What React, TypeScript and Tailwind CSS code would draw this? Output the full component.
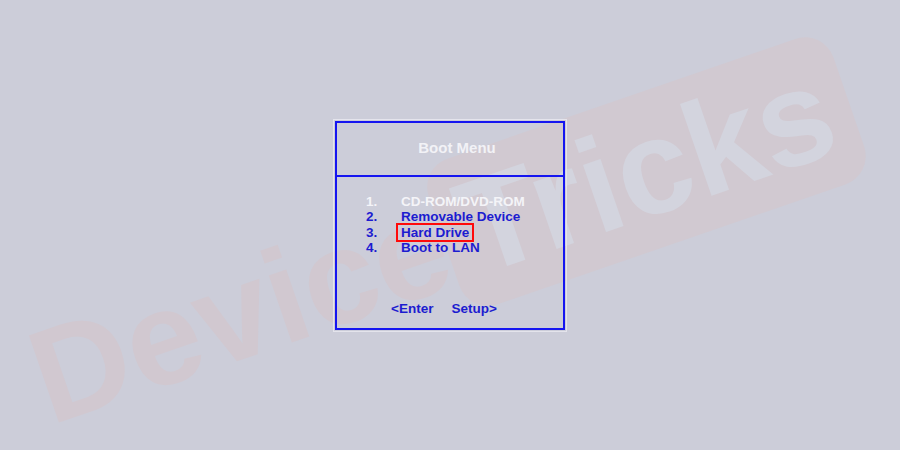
const items = [
  { n: "1.", label: "CD-ROM/DVD-ROM", active: true },
  { n: "2.", label: "Removable Device" },
  { n: "3.", label: "Hard Drive", marked: true },
  { n: "4.", label: "Boot to LAN" },
];

function Watermark() {
  // faint site watermark sitting behind the boot menu
  return (
    <div className="pointer-events-none absolute left-[442px] top-[242px] -translate-x-1/2 -translate-y-1/2 rotate-[-19deg]">
      <div className="flex items-center font-['Liberation_Sans',Arial,sans-serif] text-[134px] font-bold leading-none">
        <span className="text-[#d1c8d0]">Device</span>
        <span className="rounded-[30px] bg-[#d1c9d1] px-5 pb-3 pt-2 text-[#d3d4de]">Tricks</span>
      </div>
    </div>
  );
}

export default function App() {
  return (
    <div className="relative flex h-[450px] w-[900px] items-center justify-center overflow-hidden bg-[#cccdd9] font-['Liberation_Sans',Arial,sans-serif]">
      <Watermark />
      <div className="relative flex h-[209px] w-[230px] flex-col border-2 border-[#1515f0] outline outline-1 outline-offset-1 outline-[#e4e4ec]">
        <div className="flex h-[54px] items-center justify-center border-b-2 border-[#1515f0] pl-[14px]">
          <span className="text-[15px] font-bold text-[#f2f2f6]">Boot Menu</span>
        </div>
        <div className="flex flex-1 flex-col pl-[29px] pt-[17px]">
          {items.map((it) => (
            <div
              key={it.n}
              className={`flex text-[13.5px] font-bold leading-[15.5px] ${it.active ? "text-[#f4f4f8]" : "text-[#1c1cd0]"}`}
            >
              <span className="w-[35px]">{it.n}</span>
              <span className={it.marked ? "-mx-[5px] -my-[2px] border-[2.5px] border-[#ff0a0a] px-[3px] py-0" : ""}>
                {it.label}
              </span>
            </div>
          ))}
          <div className="mt-auto mb-[8px] flex gap-[18px] pl-[25px] text-[13.5px] font-bold text-[#1c1cd0]">
            <span>&lt;Enter</span>
            <span>Setup&gt;</span>
          </div>
        </div>
      </div>
    </div>
  );
}
